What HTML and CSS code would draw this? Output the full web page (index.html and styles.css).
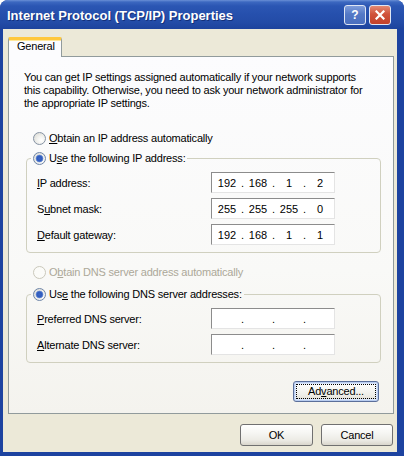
FILE: index.html
```html
<!DOCTYPE html>
<html>
<head>
<meta charset="utf-8">
<link rel="stylesheet" href="styles.css">
</head>
<body>
<div class="window">
  <div class="titlebar">
    <span class="title">Internet Protocol (TCP/IP) Properties</span>
    <div class="caption-btns">
      <span class="cbtn help">?</span>
      <span class="cbtn close"><svg width="10" height="10" viewBox="0 0 10 10"><path d="M1.5 1.5 L8.5 8.5 M8.5 1.5 L1.5 8.5" stroke="#fff" stroke-width="2.2" stroke-linecap="square"/></svg></span>
    </div>
  </div>
  <div class="client">
    <div class="tabs"><div class="tab">General</div></div>
    <div class="panel">
      <p class="intro">You can get IP settings assigned automatically if your network supports<br>this capability. Otherwise, you need to ask your network administrator for<br>the appropriate IP settings.</p>

      <div class="radio first"><span class="rb"></span><span><u>O</u>btain an IP address automatically</span></div>

      <fieldset class="group g1">
        <legend class="radio"><span class="rb on"></span><span>U<u>s</u>e the following IP address:</span></legend>
        <div class="rows">
          <span class="lbl"><u>I</u>P address:</span>
          <div class="ip"><span class="oct">192</span><span class="dot">.</span><span class="oct">168</span><span class="dot">.</span><span class="oct">1</span><span class="dot">.</span><span class="oct">2</span></div>
          <span class="lbl">S<u>u</u>bnet mask:</span>
          <div class="ip"><span class="oct">255</span><span class="dot">.</span><span class="oct">255</span><span class="dot">.</span><span class="oct">255</span><span class="dot">.</span><span class="oct">0</span></div>
          <span class="lbl"><u>D</u>efault gateway:</span>
          <div class="ip"><span class="oct">192</span><span class="dot">.</span><span class="oct">168</span><span class="dot">.</span><span class="oct">1</span><span class="dot">.</span><span class="oct">1</span></div>
        </div>
      </fieldset>

      <div class="radio disabled third"><span class="rb"></span><span>O<u>b</u>tain DNS server address automatically</span></div>

      <fieldset class="group g2">
        <legend class="radio"><span class="rb on"></span><span>Us<u>e</u> the following DNS server addresses:</span></legend>
        <div class="rows">
          <span class="lbl"><u>P</u>referred DNS server:</span>
          <div class="ip"><span class="oct"></span><span class="dot">.</span><span class="oct"></span><span class="dot">.</span><span class="oct"></span><span class="dot">.</span><span class="oct"></span></div>
          <span class="lbl"><u>A</u>lternate DNS server:</span>
          <div class="ip"><span class="oct"></span><span class="dot">.</span><span class="oct"></span><span class="dot">.</span><span class="oct"></span><span class="dot">.</span><span class="oct"></span></div>
        </div>
      </fieldset>

      <div class="adv-row"><button class="btn adv"><span class="focus">Ad<u>v</u>anced...</span></button></div>
    </div>
    <div class="footer">
      <button class="btn ok">OK</button>
      <button class="btn cancel">Cancel</button>
    </div>
  </div>
</div>
</body>
</html>
```
FILE: styles.css
```css
* { box-sizing: border-box; }
html, body { margin: 0; padding: 0; }
body {
  width: 404px;
  height: 456px;
  overflow: hidden;
  background: #ffffff;
  font-family: "Liberation Sans", Arial, sans-serif;
  font-size: 11px;
  letter-spacing: -0.2px;
  color: #000;
}
u { text-decoration: underline; text-underline-offset: 1px; }

.window {
  width: 404px;
  height: 456px;
  display: flex;
  flex-direction: column;
  background: #1d43a0;
  border-radius: 8px 8px 0 0;
  overflow: hidden;
}

.titlebar {
  height: 29px;
  flex: none;
  display: flex;
  align-items: center;
  padding: 0 13px 0 7px;
  background: linear-gradient(180deg, #6a8fd6 0px, #3c68c0 2px, #2b56b3 6px, #2650ad 14px, #234ca7 22px, #1d439d 29px);
}
.title {
  flex: 1;
  color: #fff;
  font-weight: bold;
  font-size: 13px;
  letter-spacing: 0;
  text-shadow: 1px 1px 0 #13307a;
  padding-top: 1px;
}
.caption-btns { display: flex; gap: 3px; }
.cbtn {
  width: 22px;
  height: 20px;
  border: 1px solid #dfe6f4;
  border-radius: 3px;
  display: flex;
  align-items: center;
  justify-content: center;
  color: #fff;
}
.help {
  background: linear-gradient(180deg, #7f9ddb 0%, #5479c6 45%, #4a6fbf 100%);
  font-weight: bold;
  font-size: 12px;
  letter-spacing: 0;
}
.close {
  background: linear-gradient(180deg, #e38a74 0%, #d0523b 45%, #c2412a 100%);
}

.client {
  flex: 1;
  margin: 0 7px 4px 3px;
  background: #ece9d8;
  padding: 8px 3px 0 5px;
  display: flex;
  flex-direction: column;
}

.tabs { display: flex; height: 19px; flex: none; }
.tab {
  width: 54px;
  height: 20px;
  position: relative;
  z-index: 1;
  background: #fcfcfe;
  border: 1px solid #919b9c;
  border-top: 3px solid #ffc83c;
  border-bottom: none;
  border-radius: 2px 2px 0 0;
  box-shadow: inset 0 1px 0 #ffe79a;
  padding-left: 8px;
  line-height: 13px;
}

.panel {
  flex: none;
  height: 358px;
  border: 1px solid #919b9c;
  background: linear-gradient(180deg, #fcfcfe 0%, #f9f9f7 60%, #f4f3ee 100%);
  padding: 14px 12px 0 15px;
  display: flex;
  flex-direction: column;
}

.intro { margin: 0; line-height: 13px; white-space: nowrap; }

.radio {
  display: flex;
  align-items: center;
  gap: 3px;
  height: 16px;
  line-height: 16px;
  white-space: nowrap;
}
.radio.first { margin: 20px 0 0 9px; }
.radio.third { margin: 11px 0 0 9px; }
.rb {
  width: 13px;
  height: 13px;
  flex: none;
  border-radius: 50%;
  border: 1px solid #8592a3;
  background: radial-gradient(circle at 65% 65%, #ffffff 0%, #f1f1ee 40%, #d6d6d0 100%);
}
.rb.on {
  border-color: #6f86a8;
  background:
    radial-gradient(circle at 50% 50%, #3a66c6 0, #2f5bbd 2.6px, #7b9ad8 3.6px, rgba(255,255,255,0) 4.2px),
    radial-gradient(circle at 65% 65%, #ffffff 0%, #f1f1ee 40%, #d6d6d0 100%);
}
.radio.disabled { color: #aca899; }
.radio.disabled .rb { border-color: #cac8bb; background: #fbfbf8; }

.group {
  margin: 4px 0 0 2px;
  padding: 6px 0 7px 10px;
  border: 1px solid #d0d0bf;
  border-radius: 4px;
  min-width: 0;
}
.group.g2 { margin-top: 6px; }
.group legend {
  padding: 0 2px;
  margin-left: -6px;
}

.rows {
  display: grid;
  grid-template-columns: 174px 124px;
  grid-auto-rows: 21px;
  row-gap: 5px;
  align-items: center;
}
.lbl { white-space: nowrap; }
.ip {
  height: 21px;
  display: flex;
  align-items: center;
  background: #fff;
  border: 1px solid;
  border-color: #8c8c8c #e4e4e4 #e4e4e4 #8c8c8c;
  padding-left: 1px;
}
.oct { width: 28px; text-align: center; letter-spacing: 0; }
.dot { width: 3px; text-align: center; letter-spacing: 0; }

.adv-row { display: flex; justify-content: flex-end; margin: 18px 2px 0 0; }
.btn {
  font-family: "Liberation Sans", Arial, sans-serif;
  font-size: 11px;
  letter-spacing: -0.2px;
  color: #000;
  border: 1px solid #707070;
  border-radius: 3px;
  background: linear-gradient(180deg, #ffffff 0%, #f6f6f3 40%, #ecebe5 75%, #d9d6cc 100%);
  padding: 0;
  display: flex;
  align-items: center;
  justify-content: center;
}
.adv {
  width: 86px;
  height: 21px;
  border-color: #5b6f9a;
  box-shadow: inset 0 0 0 1px #b9cdf0, inset 0 0 0 2px #d9e5fa;
}
.focus {
  display: block;
  padding: 0 3px;
  line-height: 13px;
  outline: 1px dotted #000;
  outline-offset: 0;
  width: 78px;
  text-align: center;
}

.footer {
  display: flex;
  justify-content: flex-end;
  gap: 8px;
  margin-top: 10px;
  padding-right: 1px;
}
.ok { width: 73px; height: 22px; }
.cancel { width: 72px; height: 22px; }
```
